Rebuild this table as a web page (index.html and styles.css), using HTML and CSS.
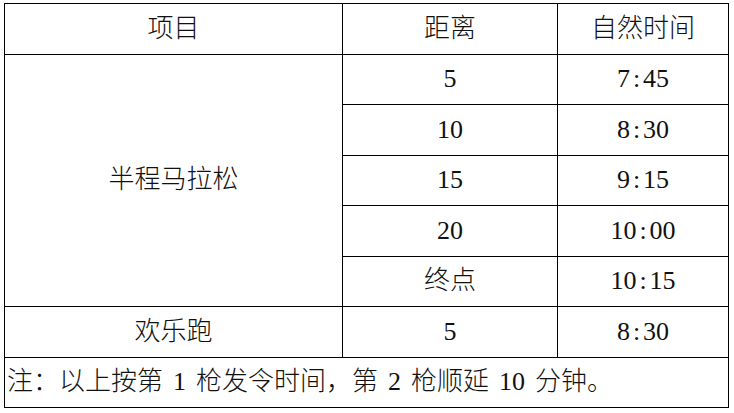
FILE: index.html
```html
<!DOCTYPE html>
<html lang="zh-CN">
<head>
<meta charset="utf-8">
<title>时间表</title>
<link rel="stylesheet" href="styles.css">
</head>
<body>
<table class="schedule">
  <colgroup>
    <col class="c1">
    <col class="c2">
    <col class="c3">
  </colgroup>
  <tr class="row">
    <td>项目</td>
    <td>距离</td>
    <td>自然时间</td>
  </tr>
  <tr class="row">
    <td rowspan="5">半程马拉松</td>
    <td>5</td>
    <td>7<span class="colon">:</span>45</td>
  </tr>
  <tr class="row">
    <td>10</td>
    <td>8<span class="colon">:</span>30</td>
  </tr>
  <tr class="row">
    <td>15</td>
    <td>9<span class="colon">:</span>15</td>
  </tr>
  <tr class="row">
    <td>20</td>
    <td>10<span class="colon">:</span>00</td>
  </tr>
  <tr class="row">
    <td>终点</td>
    <td>10<span class="colon">:</span>15</td>
  </tr>
  <tr class="row">
    <td>欢乐跑</td>
    <td>5</td>
    <td>8<span class="colon">:</span>30</td>
  </tr>
  <tr class="row">
    <td colspan="3" class="note">注：以上按第 1 枪发令时间，第 2 枪顺延 10 分钟。</td>
  </tr>
</table>
</body>
</html>
```

FILE: styles.css
```css
html, body {
  margin: 0;
  padding: 0;
  background: #ffffff;
}

body {
  padding: 3px 0 0 4px;
  font-family: "Liberation Serif", "Noto Sans CJK SC", serif;
  font-size: 26px;
  font-weight: 300;
  color: #111111;
}

.schedule {
  border-collapse: collapse;
  width: 724px;
  table-layout: fixed;
}

.c1 { width: 338px; }
.c2 { width: 215px; }
.c3 { width: 171px; }

.schedule td {
  border: 1px solid #000000;
  text-align: center;
  vertical-align: middle;
  padding: 0;
  line-height: 1;
}

.row {
  height: 50.5px;
}

.colon {
  margin: 0 3px;
}

.schedule td.note {
  text-align: left;
  padding-left: 2px;
  word-spacing: 3.5px;
}
```
